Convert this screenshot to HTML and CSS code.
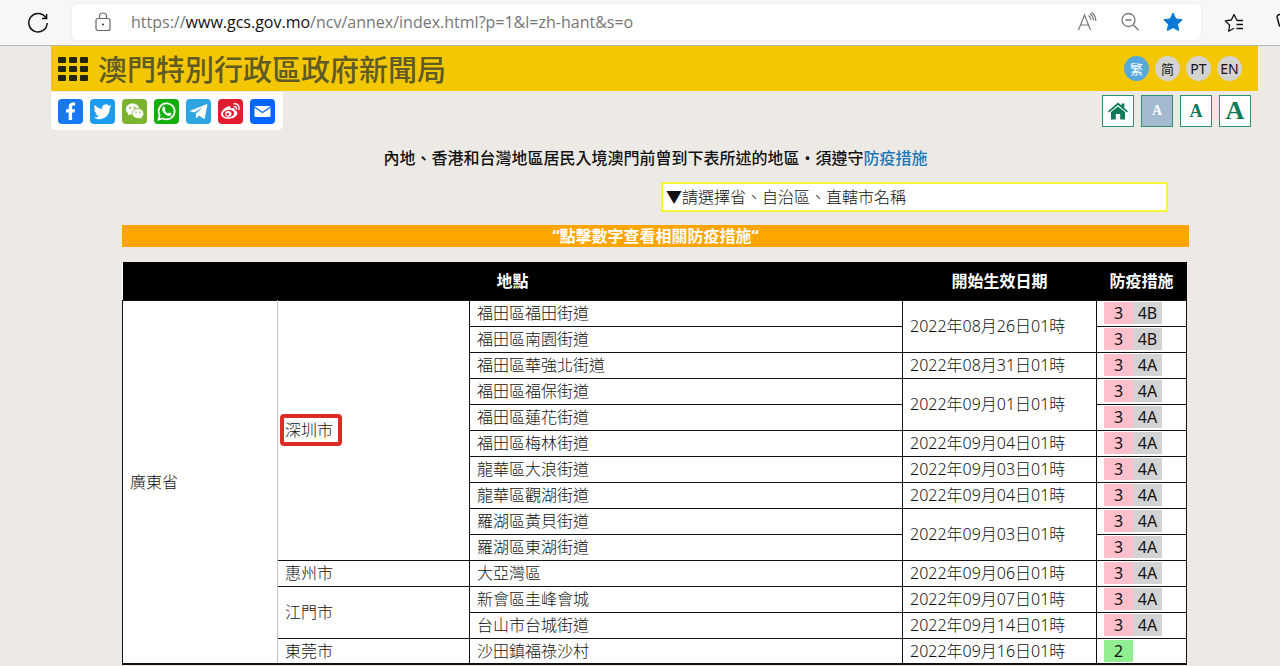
FILE: index.html
```html
<!DOCTYPE html>
<html lang="zh-Hant">
<head>
<meta charset="utf-8">
<title>澳門特別行政區政府新聞局</title>
<link rel="stylesheet" href="styles.css">
</head>
<body>
<div class="browser">
  <button class="tool reload" aria-label="Reload"><svg width="22" height="22" viewBox="0 0 22 22" fill="none" stroke="#111" stroke-width="1.5"><path d="M19 6.2A9.2 9.2 0 1 0 20.2 11M19.6 2v4.6H15"/></svg></button>
  <div class="address">
    <svg class="lock" width="16" height="20" viewBox="0 0 16 20" fill="none" stroke="#666" stroke-width="1.2"><rect x="1" y="6.5" width="14" height="12" rx="2"/><path d="M4.500 6.500V4a3.500 3 0 0 1 7 0v2.500"/><circle cx="8" cy="12.500" r="1" fill="#333" stroke="none"/></svg>
    <p class="url">https://<span class="host">www.gcs.gov.mo</span>/ncv/annex/index.html?p=1&amp;l=zh-hant&amp;s=o</p>
    <button class="tool" aria-label="Read aloud"><svg width="20" height="20" viewBox="0 0 20 20" fill="none" stroke="#777" stroke-width="1.200"><path d="M1.500 18 7.500 3l6 15M3.500 13h8M11.500 3.500c1.500 1 2.200 2.500 2.300 4.500M13 1.800c2.200 1.500 3.300 3.500 3.500 6.700M14.600.6c2.600 1.800 4 4.500 4.300 8.400"/></svg></button>
    <button class="tool" aria-label="Zoom out"><svg width="20" height="20" viewBox="0 0 20 20" fill="none" stroke="#777" stroke-width="1.300"><circle cx="8.500" cy="8" r="6.500"/><path d="m13.200 12.800 5.300 5.400M5.500 8h6"/></svg></button>
    <button class="tool" aria-label="Bookmarked"><svg width="20" height="20" viewBox="0 0 20 20" fill="#0a78d4"><path d="m10 1 2.800 5.900 6.400.8-4.700 4.500 1.200 6.400L10 15.500l-5.700 3.100 1.200-6.400L.8 7.700l6.400-.8z" stroke="#0a78d4" stroke-linejoin="round"/></svg></button>
  </div>
  <button class="tool favorites" aria-label="Favorites"><svg width="20" height="20" viewBox="0 0 20 20" fill="none" stroke="#111" stroke-width="1.300" stroke-linejoin="round"><path d="M19 7.500h-6L10 1.500 7.300 7l-6 .9 4.400 4.300-1 6 5.300-2.900M12.500 11.500H19M12.500 15.500H19"/></svg></button>
  <button class="tool" aria-label="Collections"><svg width="20" height="20" viewBox="0 0 20 20" fill="none" stroke="#111" stroke-width="1.500"><path d="M16 1.500H4a2.500 2.500 0 0 0-2.800 3L3 11.500c.4 1.600 1 2 2.500 2H16"/></svg></button>
</div>

<div class="page">
  <header class="banner">
    <button class="menu" aria-label="選單"><i></i><i></i><i></i><i></i><i></i><i></i><i></i><i></i><i></i></button>
    <h1 class="title">澳門特別行政區政府新聞局</h1>
    <nav class="langs">
      <a class="lang current" href="#">繁</a><a class="lang" href="#">简</a><a class="lang latin" href="#">PT</a><a class="lang latin" href="#">EN</a>
    </nav>
  </header>

  <div class="tools">
    <div class="share">
      <a class="social facebook" href="#" aria-label="Facebook"><svg viewBox="0 0 25 25" fill="#fff"><path d="M10.700 21v-7.500H8v-3.300h2.700V8c0-3 1.600-4.500 4.200-4.500h2.300v3.100h-1.600c-1.200 0-1.500.6-1.500 1.600v2H17l-.5 3.300h-2.400V21z"/></svg></a>
      <a class="social twitter" href="#" aria-label="Twitter"><svg viewBox="0 0 25 25" fill="#fff"><path d="M21.500 7.200c-.7.300-1.300.5-2.100.6.700-.5 1.300-1.200 1.600-2-.7.400-1.500.7-2.300.9a3.700 3.700 0 0 0-6.400 3.300c-3-.1-5.700-1.600-7.600-3.900-1 1.800-.4 3.900 1.200 4.900-.6 0-1.200-.2-1.700-.5 0 1.900 1.300 3.300 3 3.700-.6.200-1.100.1-1.700.1.500 1.400 1.800 2.500 3.400 2.600a7.500 7.500 0 0 1-5.400 1.500c7.200 4.400 16 .4 16.200-8.800 0-.2 0-.4 0-.6.700-.5 1.300-1.100 1.800-1.800z"/></svg></a>
      <a class="social wechat" href="#" aria-label="WeChat"><svg viewBox="0 0 25 25"><path fill="#fff" d="M10.500 4.500c-3.700 0-6.600 2.500-6.600 5.600 0 1.700.9 3.300 2.400 4.300L5.600 16.500l2.600-1.300c.7.200 1.500.3 2.300.3 3.700 0 6.700-2.400 6.700-5.500s-3-5.500-6.700-5.500z"/><path fill="#fff" stroke="#7bb32e" stroke-width=".8" d="M16 9.600c-3.300 0-5.900 2.200-5.900 5s2.600 4.900 5.900 4.900c.7 0 1.300-.1 1.900-.2l2.300 1.200-.6-2c1.300-.9 2.200-2.300 2.200-3.900 0-2.800-2.600-5-5.800-5z"/><g fill="#7bb32e"><circle cx="8.200" cy="8.700" r="1"/><circle cx="12.700" cy="8.700" r="1"/><circle cx="14" cy="13.300" r=".8"/><circle cx="18" cy="13.300" r=".8"/></g></svg></a>
      <a class="social whatsapp" href="#" aria-label="WhatsApp"><svg viewBox="0 0 25 25"><path fill="none" stroke="#fff" stroke-width="1.700" d="m4.500 20.500 1.200-4.300A8 8 0 1 1 9 19.400z"/><path fill="#fff" d="M9 8c.6-.7 1.400-.5 1.600 0l.8 1.900c.1.500-.8 1.200-.8 1.400.7 1.500 1.800 2.500 3.300 3.100.4.100 1-1.100 1.400-1 .7.200 2 .8 2.100 1.100.1 1-.5 2-1.600 2.300-1.500.4-3.700-.5-5.500-2.200C8 12.300 7.500 9.800 9 8z"/></svg></a>
      <a class="social telegram" href="#" aria-label="Telegram"><svg viewBox="0 0 25 25" fill="#fff"><path d="M4.200 11.700 20.500 5.300c.8-.2 1 .3.900.9l-2.700 12.700c-.2 1-.8 1.100-1.500.7l-4.100-3-2.200 2.100c-.5.500-1 .3-1-.3l.1-4 7-6.400-8.700 5.500-4-1.200c-.8-.2-.8-.3-.1-.6z"/></svg></a>
      <a class="social weibo" href="#" aria-label="Weibo"><svg viewBox="0 0 25 25"><path fill="#fff" d="M10.500 7.300c1.500-.5 2.700.3 2.200 2.300 2.200-.9 4.400-.8 4.100 1.600 3 .9 3.200 3.400 1.700 5.400-2 2.600-6.100 3.600-9.600 3.200C3.900 19.200 1.500 16 4 12.300c1.700-2.500 4.300-4.400 6.500-5z"/><ellipse cx="10.600" cy="14.600" rx="5.600" ry="3.700" fill="#df1c30" transform="rotate(-8 10.600 14.600)"/><ellipse cx="10.300" cy="14.800" rx="3.200" ry="2.900" fill="#fff"/><circle cx="9.600" cy="15.300" r="1.300" fill="#df1c30"/><path fill="none" stroke="#fff" stroke-width="1.400" stroke-linecap="round" d="M16 4.900c3.600-.6 6 2.200 4.900 5.700M16.200 7.600c1.700-.2 2.700.9 2.200 2.400"/></svg></a>
      <a class="social mail" href="#" aria-label="Email"><svg viewBox="0 0 25 25"><rect x="4.500" y="7" width="16" height="11" rx="1" fill="#fff"/><path fill="none" stroke="#0166ff" stroke-width="1.300" d="m4.500 8 8 5.500 8-5.500"/></svg></a>
    </div>
    <div class="sizes">
      <a class="box" href="#" aria-label="主頁"><svg width="20" height="18" viewBox="0 0 20 18" fill="#0d7a58"><path d="M10 .5 13.500 3.500V1.500h2.800v4.500L20 9.200l-1 1.200L10 3 1 10.400 0 9.200z"/><path d="M10 4.400 17 10v7.500h-4.800V12H7.800v5.500H3V10z"/></svg></a>
      <button class="box small selected">A</button>
      <button class="box medium">A</button>
      <button class="box large">A</button>
    </div>
  </div>

  <main class="content">
    <p class="notice">內地、香港和台灣地區居民入境澳門前曾到下表所述的地區・須遵守<a class="link" href="#">防疫措施</a></p>
    <div class="filter">
      <select class="province" aria-label="請選擇省、自治區、直轄市名稱"><option>▼請選擇省、自治區、直轄市名稱</option></select>
    </div>
    <p class="hint">“點擊數字查看相關防疫措施“</p>
    <table class="areas">
      <colgroup><col class="c-province"><col class="c-city"><col><col class="c-date"><col class="c-measure"></colgroup>
      <thead><tr><th colspan="3">地點</th><th>開始生效日期</th><th>防疫措施</th></tr></thead>
      <tbody>
        <tr><td class="faint" rowspan="14">廣東省</td><td rowspan="10"><span class="marked">深圳市</span></td><td>福田區福田街道</td><td rowspan="2">2022年08月26日01時</td><td><div class="tags"><a class="tag pink" href="#">3</a><a class="tag gray" href="#">4B</a></div></td></tr>
        <tr><td>福田區南園街道</td><td><div class="tags"><a class="tag pink" href="#">3</a><a class="tag gray" href="#">4B</a></div></td></tr>
        <tr><td>福田區華強北街道</td><td>2022年08月31日01時</td><td><div class="tags"><a class="tag pink" href="#">3</a><a class="tag gray" href="#">4A</a></div></td></tr>
        <tr><td>福田區福保街道</td><td rowspan="2">2022年09月01日01時</td><td><div class="tags"><a class="tag pink" href="#">3</a><a class="tag gray" href="#">4A</a></div></td></tr>
        <tr><td>福田區蓮花街道</td><td><div class="tags"><a class="tag pink" href="#">3</a><a class="tag gray" href="#">4A</a></div></td></tr>
        <tr><td>福田區梅林街道</td><td>2022年09月04日01時</td><td><div class="tags"><a class="tag pink" href="#">3</a><a class="tag gray" href="#">4A</a></div></td></tr>
        <tr><td>龍華區大浪街道</td><td>2022年09月03日01時</td><td><div class="tags"><a class="tag pink" href="#">3</a><a class="tag gray" href="#">4A</a></div></td></tr>
        <tr><td>龍華區觀湖街道</td><td>2022年09月04日01時</td><td><div class="tags"><a class="tag pink" href="#">3</a><a class="tag gray" href="#">4A</a></div></td></tr>
        <tr><td>羅湖區黃貝街道</td><td rowspan="2">2022年09月03日01時</td><td><div class="tags"><a class="tag pink" href="#">3</a><a class="tag gray" href="#">4A</a></div></td></tr>
        <tr><td>羅湖區東湖街道</td><td><div class="tags"><a class="tag pink" href="#">3</a><a class="tag gray" href="#">4A</a></div></td></tr>
        <tr><td>惠州市</td><td>大亞灣區</td><td>2022年09月06日01時</td><td><div class="tags"><a class="tag pink" href="#">3</a><a class="tag gray" href="#">4A</a></div></td></tr>
        <tr><td rowspan="2">江門市</td><td>新會區圭峰會城</td><td>2022年09月07日01時</td><td><div class="tags"><a class="tag pink" href="#">3</a><a class="tag gray" href="#">4A</a></div></td></tr>
        <tr><td>台山市台城街道</td><td>2022年09月14日01時</td><td><div class="tags"><a class="tag pink" href="#">3</a><a class="tag gray" href="#">4A</a></div></td></tr>
        <tr><td>東莞市</td><td>沙田鎮福祿沙村</td><td>2022年09月16日01時</td><td><div class="tags"><a class="tag green" href="#">2</a></div></td></tr>
      </tbody>
    </table>
  </main>
</div>
</body>
</html>
```
FILE: styles.css
```css
* { box-sizing: border-box; }
html { overflow: hidden; }
body {
  margin: 0;
  background: #edeae6;
  color: #111;
  font: 16px/20px "Noto Sans", "Noto Sans CJK TC", sans-serif;
}
p, h1 { margin: 0; }
a { color: inherit; text-decoration: none; }
button { margin: 0; padding: 0; border: 0; background: none; font: inherit; }

/* Browser toolbar */
.browser {
  display: flex;
  align-items: center;
  height: 46px;
  padding-left: 27px;
  overflow: hidden;
  background: #f7f7f7;
  border-bottom: 1px solid #b8b8b8;
}
.tool { display: flex; flex: none; }
.address {
  display: flex;
  flex: 1;
  align-items: center;
  gap: 23px;
  height: 36px;
  margin: 0 23px 2px 23px;
  padding: 0 18px 0 23px;
  background: #fff;
  border-radius: 5px;
  box-shadow: 0 0 3px #e4e4e4;
}
.lock { flex: none; }
.url {
  flex: 1;
  margin-left: -3px;
  font-family: "Open Sans", sans-serif;
  color: #767676;
  white-space: nowrap;
}
.host { color: #111; }
.favorites { margin-right: 32px; }
.browser > .tool:last-child { margin-right: -16px; }

/* Site header */
.page { padding: 0 22px 0 51px; }
.banner {
  display: flex;
  align-items: center;
  height: 45px;
  padding: 0 16px 0 7px;
  background: #f3c802;
}
.menu {
  display: grid;
  grid-template-columns: repeat(3, 8px);
  gap: 3px;
}
.menu i { height: 6px; border-radius: 1px; background: #24230f; }
.title {
  flex: 1;
  margin-left: 10px;
  color: #605a27;
  font: 500 29px/45px "Noto Sans CJK TC", sans-serif;
}
.langs { display: flex; gap: 6px; }
.lang {
  width: 25px;
  height: 25px;
  border-radius: 50%;
  background: #d4d3d0;
  font: 13px/25px "Noto Sans CJK TC", sans-serif;
  text-align: center;
}
.latin { font: 14px/25px "Noto Sans", sans-serif; }
.current { background: #57a9dd; color: #fff; }

.tools {
  display: flex;
  justify-content: space-between;
  padding-right: 7px;
}
.share {
  display: flex;
  gap: 7px;
  margin-top: 1px;
  padding: 7px 8px 6px 7px;
  background: #fff;
  border-radius: 0 0 5px 5px;
}
.social { width: 25px; height: 25px; border-radius: 4px; }
.social svg { display: block; }
.facebook { background: #1877f2; }
.twitter { background: #1d9bf0; }
.wechat { background: #7bb32e; }
.whatsapp { background: #12af0a; }
.telegram { background: #2ca5e0; }
.weibo { background: #df1c30; }
.mail { background: #0166ff; }
.sizes { display: flex; gap: 7px; padding-top: 4px; }
.box {
  display: flex;
  align-items: center;
  justify-content: center;
  width: 32px;
  height: 32px;
  border: 1px solid #2f8f70;
  background: #fff;
  color: #0d7a58;
  font-family: "Liberation Serif", serif;
  font-weight: bold;
}
.small { font-size: 14px; }
.medium { font-size: 18px; }
.large { font-size: 26px; }
.selected { background: #a4bad0; color: #fff; }

/* Main content */
.content { padding: 18px 69px 0 71px; }
.notice { font-weight: 500; text-align: center; white-space: nowrap; }
.link { color: #1c76b8; }
.filter {
  display: flex;
  justify-content: flex-end;
  margin-top: 14px;
  padding-right: 21px;
}
.province {
  width: 507px;
  height: 30px;
  padding: 0 3px 3px;
  appearance: none;
  border: 2px solid #f5f53c;
  border-radius: 0;
  background: #fff;
  color: #111;
  font: 300 16px/20px "Noto Sans CJK TC", sans-serif;
}
.hint {
  margin-top: 13px;
  background: #ffa500;
  color: #fff;
  font-weight: 700;
  line-height: 22px;
  text-align: center;
}
.areas {
  width: calc(100% - 2px);
  margin-top: 15px;
  table-layout: fixed;
  border-collapse: collapse;
  background: #fff;
  font-weight: 300;
}
.c-province { width: 155px; }
.c-city { width: 192px; }
.c-date { width: 194px; }
.c-measure { width: 90px; }
.areas th {
  height: 38px;
  padding: 0;
  background: #000;
  color: #fff;
  font-weight: 700;
}
.areas td {
  height: 26px;
  padding: 0 7px;
  border: 1px solid #111;
  line-height: 20px;
  white-space: nowrap;
}
.areas .faint { border-right-color: #c4c4c4; border-bottom-width: 2px; }
.areas tr:last-child td { border-bottom-width: 2px; }
.tags { display: flex; }
.tag { width: 29px; line-height: 22px; text-align: center; font-weight: 400; }
.pink { background: #ffc0cb; }
.gray { background: #d3d3d3; }
.green { background: #90ee90; }
.marked { position: relative; }
.marked::after {
  content: "";
  position: absolute;
  inset: -5px -9px -5px -5px;
  border: 4px solid #dc2d24;
  border-radius: 4px;
}
```
